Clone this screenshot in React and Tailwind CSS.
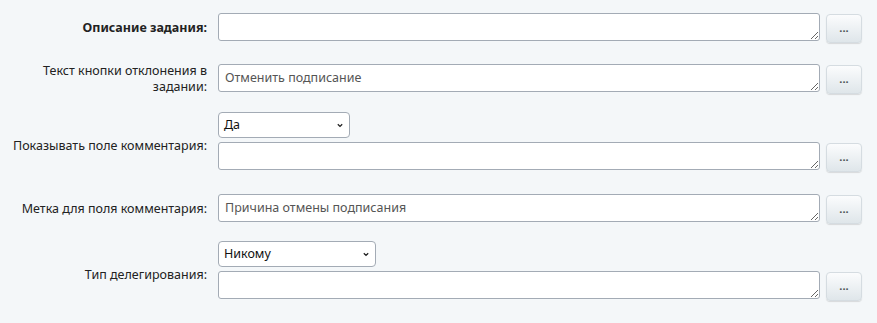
import React from "react";

const font = { fontFamily: '"Noto Sans", "Open Sans", sans-serif' };

const DotsButton = () => (
  <button className="mt-[1px] w-[36px] h-[29px] shrink-0 rounded-[4px] border border-[#d5dce1] bg-gradient-to-b from-[#fbfcfd] to-[#dfe6ea] shadow-[0_1px_1px_rgba(0,0,0,0.12)] text-[11px] font-bold leading-none text-[#4a4f55] flex items-center justify-center pb-[3px]">
    ...
  </button>
);

const Area = ({ value }) => (
  <div className="flex items-start gap-[6px]">
    <textarea
      defaultValue={value}
      className="w-[602px] h-[28px] shrink-0 rounded-[3px] border border-[#a3abb5] bg-white px-[6px] pt-[4px] text-[12.5px] leading-[17px] text-[#555] outline-none resize-y"
    />
    <DotsButton />
  </div>
);

const Select = ({ value, width }) => (
  <div
    className={`h-[26px] rounded-[4px] border border-[#a3abb5] bg-white flex items-center justify-between pl-[5px] pr-[4px] text-[12.5px] text-[#111] ${width}`}
  >
    <span>{value}</span>
    <svg width="10" height="10" viewBox="0 0 10 10">
      <path d="M2.8 4.2 L5 6.4 L7.2 4.2" fill="none" stroke="#222" strokeWidth="1.3" />
    </svg>
  </div>
);

const Row = ({ label, bold, labelOffset, mt, children }) => (
  <div className={`flex items-center ${mt}`}>
    <div
      className={`w-[218px] shrink-0 pr-[11px] text-right text-[12.5px] leading-[16px] text-[#222] ${bold ? "font-bold" : ""} ${labelOffset || ""}`}
    >
      {label}
    </div>
    <div className="flex flex-col gap-[4px]">{children}</div>
  </div>
);

export default function App() {
  return (
    <div className="w-[877px] h-[323px] bg-[#f4f7f9] pt-[13px] overflow-hidden" style={font}>
      <Row label="Описание задания:" bold mt="">
        <Area value="" />
      </Row>
      <Row label={<>Текст кнопки отклонения в<br />задании:</>} mt="mt-[20px]">
        <Area value="Отменить подписание" />
      </Row>
      <Row label="Показывать поле комментария:" labelOffset="mt-[8px]" mt="mt-[17px]">
        <Select value="Да" width="w-[132px]" />
        <Area value="" />
      </Row>
      <Row label="Метка для поля комментария:" mt="mt-[22px]">
        <Area value="Причина отмены подписания" />
      </Row>
      <Row label="Тип делегирования:" labelOffset="mt-[8px]" mt="mt-[17px]">
        <Select value="Никому" width="w-[158px]" />
        <Area value="" />
      </Row>
    </div>
  );
}
